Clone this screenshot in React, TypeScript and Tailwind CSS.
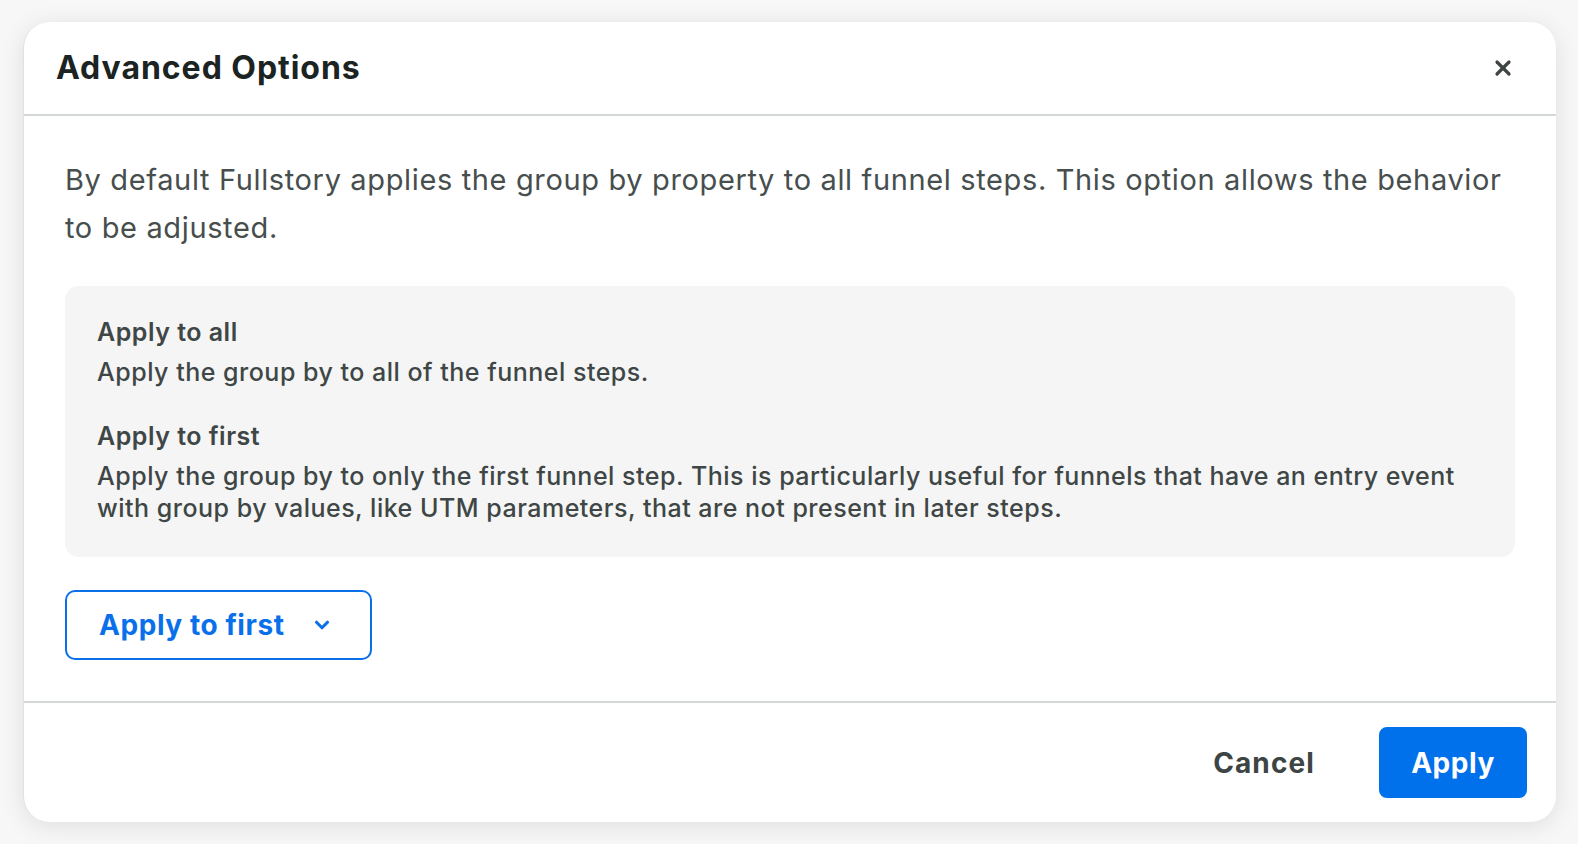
import { X, ChevronDown } from "lucide-react";

const font = { fontFamily: "Inter, 'Noto Sans', sans-serif" };

export default function App() {
  return (
    <div className="min-h-[844px] w-full bg-[#f7f7f7] pl-[23px] pt-[22px]" style={font}>
      <div className="flex h-[800px] w-[1533px] flex-col rounded-[26px] border-l border-[#dfe2e2] bg-white shadow-[0_4px_24px_rgba(0,0,0,0.10)]">
        <div className="flex h-[94px] items-center justify-between border-b-2 border-[#d3d7d7] pl-[32px] pr-[41px]">
          <h2 className="text-[32px] font-bold tracking-[0.03em] text-[#1b2323]">Advanced Options</h2>
          <X className="h-[24px] w-[24px] text-[#3d4444]" strokeWidth={3.2} />
        </div>
        <div className="flex flex-1 flex-col px-[41px] pt-[40px]">
          <p className="text-[29px] leading-[48px] tracking-[0.022em] text-[#474e4e]">
            By default Fullstory applies the group by property to all funnel steps. This option allows the behavior to be adjusted.
          </p>
          <div className="mt-[34px] rounded-[14px] bg-[#f4f5f4] pb-[33px] pl-[32px] pr-[32px] pt-[30px] text-[25px] leading-[32px] tracking-[0.02em] text-[#3f4646]">
            <div className="font-semibold">Apply to all</div>
            <div className="mt-[8px] font-medium">Apply the group by to all of the funnel steps.</div>
            <div className="mt-[32px] font-semibold">Apply to first</div>
            <div className="mt-[8px] font-medium">
              Apply the group by to only the first funnel step. This is particularly useful for funnels that have an entry event with group by values, like UTM parameters, that are not present in later steps.
            </div>
          </div>
          <div className="mt-[33px]">
            <button className="flex h-[70px] w-[307px] items-center rounded-[10px] border-2 border-[#0a70ea] pl-[32px] text-[28px] font-bold tracking-[0.02em] text-[#0a70ea]">
              <span>Apply to first</span>
              <ChevronDown className="ml-[26px] h-[22px] w-[22px]" strokeWidth={3.4} />
            </button>
          </div>
        </div>
        <div className="flex h-[121px] items-start justify-end gap-[32px] border-t-2 border-[#d3d7d7] pr-[29px] pt-[24px]">
          <button className="flex h-[71px] items-center px-[32px] text-[28px] font-bold tracking-[0.04em] text-[#3d4444]">Cancel</button>
          <button className="flex h-[71px] w-[148px] items-center justify-center rounded-[8px] bg-[#0071eb] text-[28px] font-bold tracking-[0.02em] text-white">Apply</button>
        </div>
      </div>
    </div>
  );
}
